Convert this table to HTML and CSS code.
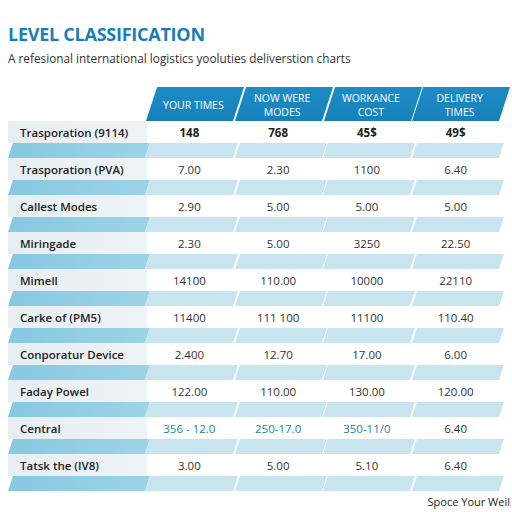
FILE: index.html
```html
<!DOCTYPE html>
<html lang="en">
  <head>
    <meta charset="UTF-8" />
    <meta name="viewport" content="width=device-width, initial-scale=1.0" />
    <title>Level Classification</title>
    <link rel="stylesheet" href="styles.css">
  </head>
  <body>
    <header class="top">
      <h1>LEVEL CLASSIFICATION</h1>
      <p class="subtitle">A refesional international logistics yooluties deliverstion charts</p>
    </header>

    <section class="chart">
      <div class="head">
        <div class="blank"></div>
        <div class="hcell"><span>YOUR TIMES</span></div>
        <div class="hcell"><span>NOW WERE<br>MODES</span></div>
        <div class="hcell"><span>WORKANCE<br>COST</span></div>
        <div class="hcell"><span>DELIVERY<br>TIMES</span></div>
      </div>

      <div class="row bold">
        <div class="label">Trasporation (9114)</div>
        <div class="val">148</div><div class="val">768</div><div class="val">45$</div><div class="val">49$</div>
      </div>
      <div class="stripe"><i></i><i></i><i></i><i></i><i></i></div>

      <div class="row">
        <div class="label">Trasporation (PVA)</div>
        <div class="val">7.00</div><div class="val">2.30</div><div class="val">1100</div><div class="val">6.40</div>
      </div>
      <div class="stripe"><i></i><i></i><i></i><i></i><i></i></div>

      <div class="row">
        <div class="label">Callest Modes</div>
        <div class="val">2.90</div><div class="val">5.00</div><div class="val">5.00</div><div class="val">5.00</div>
      </div>
      <div class="stripe"><i></i><i></i><i></i><i></i><i></i></div>

      <div class="row">
        <div class="label">Miringade</div>
        <div class="val">2.30</div><div class="val">5.00</div><div class="val">3250</div><div class="val">22.50</div>
      </div>
      <div class="stripe"><i></i><i></i><i></i><i></i><i></i></div>

      <div class="row">
        <div class="label">Mimell</div>
        <div class="val">14100</div><div class="val">110.00</div><div class="val">10000</div><div class="val">22110</div>
      </div>
      <div class="stripe"><i></i><i></i><i></i><i></i><i></i></div>

      <div class="row">
        <div class="label">Carke of (PM5)</div>
        <div class="val">11400</div><div class="val">111 100</div><div class="val">11100</div><div class="val">110.40</div>
      </div>
      <div class="stripe"><i></i><i></i><i></i><i></i><i></i></div>

      <div class="row">
        <div class="label">Conporatur Device</div>
        <div class="val">2.400</div><div class="val">12.70</div><div class="val">17.00</div><div class="val">6.00</div>
      </div>
      <div class="stripe"><i></i><i></i><i></i><i></i><i></i></div>

      <div class="row">
        <div class="label">Faday Powel</div>
        <div class="val">122.00</div><div class="val">110.00</div><div class="val">130.00</div><div class="val">120.00</div>
      </div>
      <div class="stripe"><i></i><i></i><i></i><i></i><i></i></div>

      <div class="row">
        <div class="label">Central</div>
        <div class="val blue">356 - 12.0</div><div class="val blue">250-17.0</div><div class="val blue">350-11/0</div><div class="val">6.40</div>
      </div>
      <div class="stripe"><i></i><i></i><i></i><i></i><i></i></div>

      <div class="row">
        <div class="label">Tatsk the (IV8)</div>
        <div class="val">3.00</div><div class="val">5.00</div><div class="val">5.10</div><div class="val">6.40</div>
      </div>
      <div class="stripe"><i></i><i></i><i></i><i></i><i></i></div>
    </section>

    <p class="note">Spoce Your Weil</p>
  </body>
</html>
```

FILE: styles.css
```css
body {
  margin: 0;
  padding: 0;
  background: #ffffff;
  font-family: "Open Sans", "Liberation Sans", sans-serif;
  color: #2a2a2a;
}

.top {
  padding: 22px 8px 0 8px;
}
.top h1 {
  margin: 0;
  font-size: 18px;
  line-height: 24px;
  font-weight: 700;
  color: #1a7db7;
  letter-spacing: -0.25px;
}
.subtitle {
  margin: 4px 0 0 0;
  font-size: 11.8px;
  line-height: 16px;
  color: #333;
}

.chart {
  margin: 21px 12px 0 8px;
}

.head,
.row,
.stripe {
  display: grid;
  grid-template-columns: 137px repeat(4, 1fr);
}

/* header */
.head {
  height: 34px;
}
.hcell {
  position: relative;
  display: flex;
  align-items: center;
  justify-content: center;
  text-align: center;
  color: #ffffff;
  font-size: 10.5px;
  line-height: 14px;
  padding: 2px 0 0 8px;
}
.hcell::before {
  content: "";
  position: absolute;
  top: 0;
  bottom: 0;
  left: 1px;
  right: 1px;
  background: linear-gradient(#1c8cc6, #1880ba);
  transform: skewX(-18deg);
  transform-origin: bottom left;
}
.hcell span {
  position: relative;
}

/* text rows */
.row {
  height: 22px;
  align-items: center;
  font-size: 11.5px;
}
.label {
  height: 100%;
  display: flex;
  align-items: center;
  padding-left: 12px;
  font-weight: 600;
  color: #222;
  background: linear-gradient(to right, #e7eef2, #eef3f6);
  margin-right: -2px;
}
.val {
  text-align: center;
  color: #333;
}
.bold .val {
  font-weight: 700;
  color: #1e1e1e;
}
.blue {
  color: #1f7fb5 !important;
}

/* stripes */
.stripe {
  height: 15px;
}
.stripe i {
  position: relative;
  display: block;
}
.stripe i::before {
  content: "";
  position: absolute;
  top: 0;
  bottom: 0;
  left: 0.75px;
  right: 0.75px;
  background: #c8e5ef;
  transform: skewX(-18deg);
  transform-origin: bottom left;
}
.stripe i:first-child::before {
  left: 0;
  right: 0;
  background: linear-gradient(to right, #86c9e1, #9dd3e7);
}
.stripe i:nth-child(2)::before {
  left: 0;
}

.note {
  margin: 3px 2px 0 0;
  text-align: right;
  font-size: 11px;
  color: #222;
}
```
